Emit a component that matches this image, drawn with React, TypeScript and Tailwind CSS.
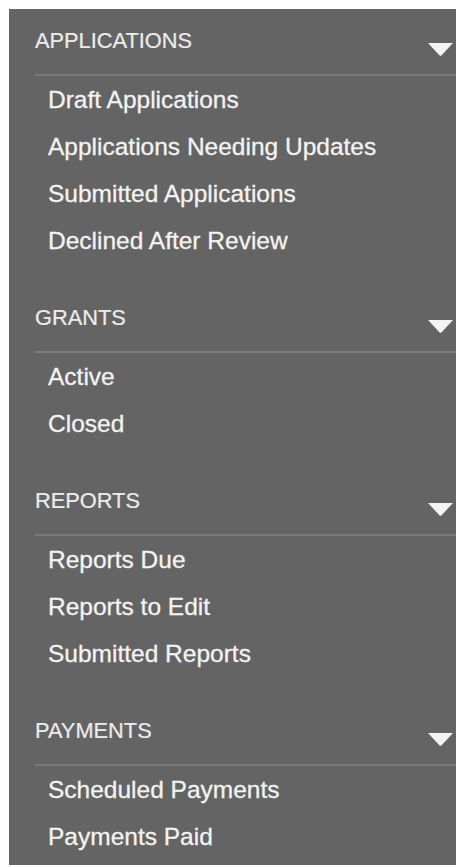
import React from "react";

type Section = { title: string; items: string[] };

const sections: Section[] = [
  {
    title: "APPLICATIONS",
    items: [
      "Draft Applications",
      "Applications Needing Updates",
      "Submitted Applications",
      "Declined After Review",
    ],
  },
  { title: "GRANTS", items: ["Active", "Closed"] },
  { title: "REPORTS", items: ["Reports Due", "Reports to Edit", "Submitted Reports"] },
  { title: "PAYMENTS", items: ["Scheduled Payments", "Payments Paid"] },
];

function Caret() {
  return (
    <svg width="25" height="13" viewBox="0 0 25 13" className="mt-[17px] shrink-0">
      <path d="M0 0 H25 L13.4 12.4 Q12.5 13.2 11.6 12.4 Z" fill="#f4f4f4" />
    </svg>
  );
}

export default function App() {
  return (
    <div className="bg-white pt-[9px] pl-[9px] w-[456px] h-[866px]">
      <nav
        className="bg-[#646464] h-[856px] pt-[17px]"
        style={{ fontFamily: '"Liberation Sans", Arial, sans-serif' }}
      >
        {sections.map((s) => (
          <div key={s.title} className="mb-[39px]">
            <div className="flex justify-between items-start h-[30px] pl-[26px] pr-[3px]">
              <span className="text-[21.8px] leading-[30px] text-[#ececec] [-webkit-text-stroke:0.2px_#ececec]">
                {s.title}
              </span>
              <Caret />
            </div>
            <div className="ml-[26px] mt-[18px] h-[2px] bg-[#7a7a7a]" />
            <ul>
              {s.items.map((item) => (
                <li
                  key={item}
                  className="h-[47px] pl-[39px] text-[24.5px] leading-[47px] text-[#f3f3f3] [-webkit-text-stroke:0.3px_#f3f3f3]"
                >
                  {item}
                </li>
              ))}
            </ul>
          </div>
        ))}
      </nav>
    </div>
  );
}
